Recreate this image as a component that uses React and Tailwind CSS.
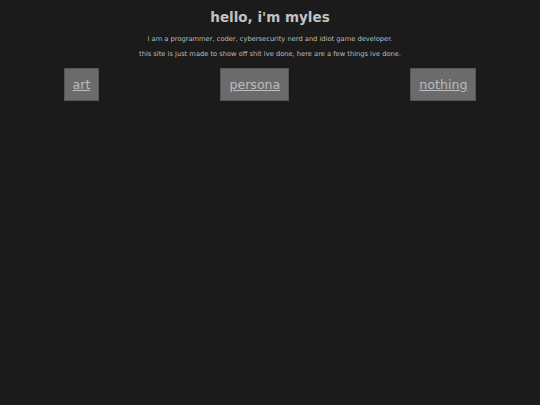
export default function App() {
  const font = { fontFamily: '"DejaVu Sans", Verdana, sans-serif' };
  return (
    <div className="min-h-[405px] w-full bg-[#1b1b1b] text-[#bdbdbd]" style={font}>
      <div className="flex flex-col items-center pt-[9px]">
        <h1 className="text-[13.5px] font-bold leading-[16px] text-[#c2c2c2]">hello, i'm myles</h1>
        <p className="mt-[9px] text-[6.7px] leading-[10px]">i am a programmer, coder, cybersecurity nerd and idiot game developer.</p>
        <p className="mt-[5px] text-[6.7px] leading-[10px]">this site is just made to show off shit ive done, here are a few things ive done.</p>
      </div>
      <div className="mt-[9px] flex justify-around px-[3px]">
        {["art", "persona", "nothing"].map((t) => (
          <a
            key={t}
            href="#"
            className="block border border-[#555555] bg-[#6b6b6b] px-[8px] py-[7px] text-[12.6px] leading-[17px] text-[#bcbcbc] underline"
          >
            {t}
          </a>
        ))}
      </div>
    </div>
  );
}
